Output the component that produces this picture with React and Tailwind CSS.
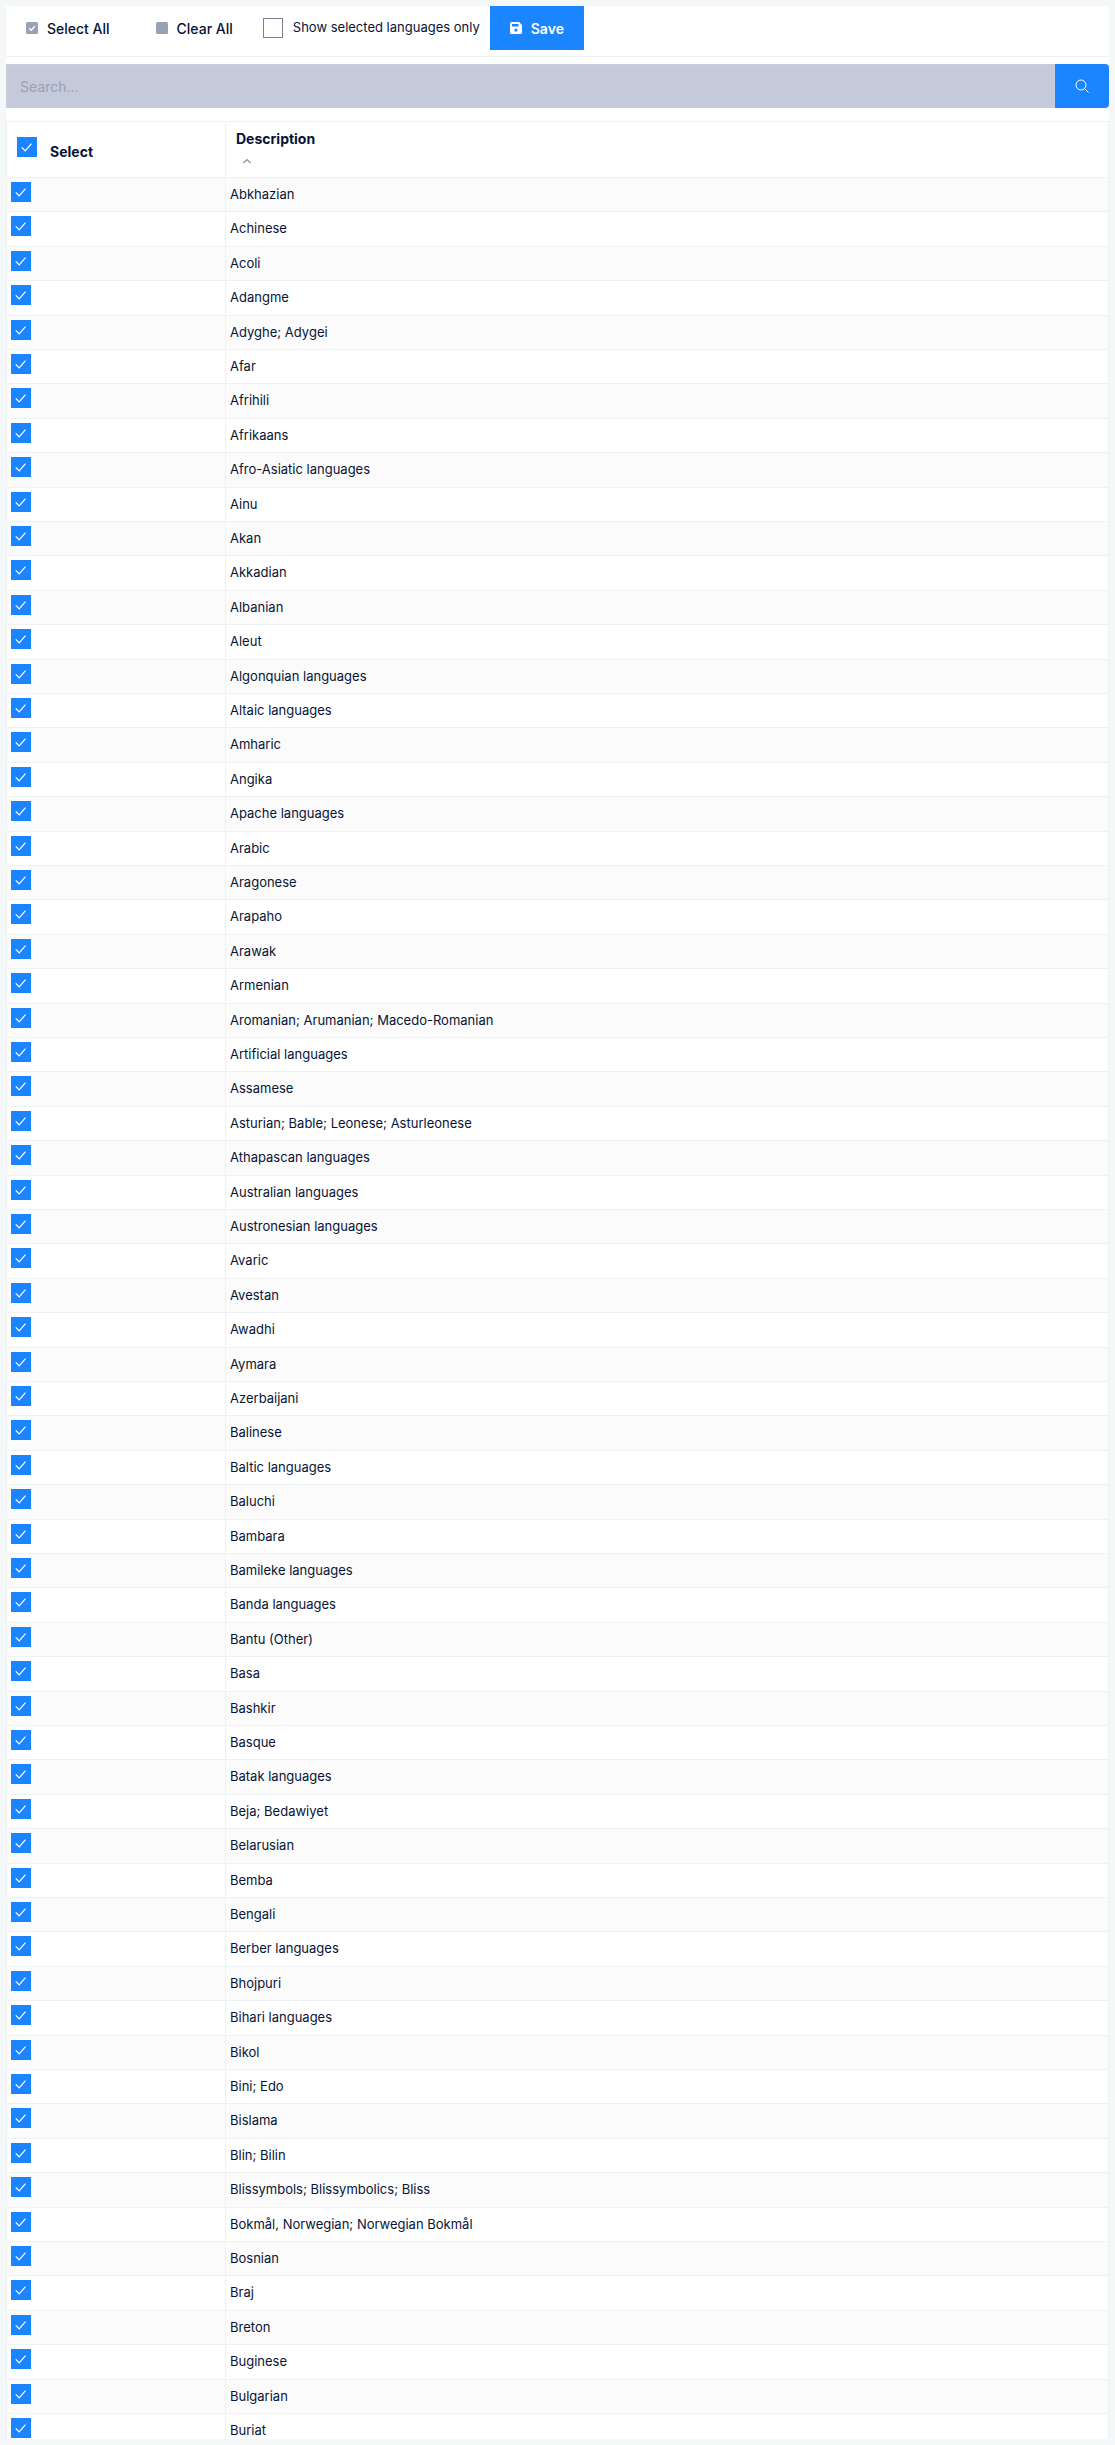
import { useState } from "react";
import clsx from "clsx";

const LANGUAGES = [
  "Abkhazian", "Achinese", "Acoli", "Adangme", "Adyghe; Adygei", "Afar", "Afrihili", "Afrikaans",
  "Afro-Asiatic languages", "Ainu", "Akan", "Akkadian", "Albanian", "Aleut", "Algonquian languages",
  "Altaic languages", "Amharic", "Angika", "Apache languages", "Arabic", "Aragonese", "Arapaho",
  "Arawak", "Armenian", "Aromanian; Arumanian; Macedo-Romanian", "Artificial languages", "Assamese",
  "Asturian; Bable; Leonese; Asturleonese", "Athapascan languages", "Australian languages",
  "Austronesian languages", "Avaric", "Avestan", "Awadhi", "Aymara", "Azerbaijani", "Balinese",
  "Baltic languages", "Baluchi", "Bambara", "Bamileke languages", "Banda languages", "Bantu (Other)",
  "Basa", "Bashkir", "Basque", "Batak languages", "Beja; Bedawiyet", "Belarusian", "Bemba", "Bengali",
  "Berber languages", "Bhojpuri", "Bihari languages", "Bikol", "Bini; Edo", "Bislama", "Blin; Bilin",
  "Blissymbols; Blissymbolics; Bliss", "Bokmål, Norwegian; Norwegian Bokmål", "Bosnian", "Braj",
  "Breton", "Buginese", "Bulgarian", "Buriat",
];

function Checkbox({ id, label, checked, onChange }) {
  return (
    <span className="grid h-5 w-5 shrink-0">
      <input
        id={id}
        type="checkbox"
        aria-label={label}
        checked={checked}
        onChange={onChange}
        className="col-start-1 row-start-1 h-5 w-5 appearance-none border border-[#7c7f96] bg-white checked:border-[#1b84ff] checked:bg-[#1b84ff]"
      />
      {checked && (
        <svg className="pointer-events-none col-start-1 row-start-1 h-5 w-5" viewBox="0 0 20 20" fill="none" stroke="#fff" strokeWidth="1.2">
          <path d="M4.8 10.3 8.2 13.800 14.500 6.600" />
        </svg>
      )}
    </span>
  );
}

function ToolbarButton({ icon, primary, onClick, children }) {
  return (
    <button
      type="button"
      onClick={onClick}
      className={clsx(
        "flex h-11 items-center gap-[9px] px-5 text-[14px]",
        primary ? "bg-[#1b84ff] font-semibold text-white" : "font-medium text-[#071437]"
      )}
    >
      {icon}
      {children}
    </button>
  );
}

export default function App() {
  const [selected, setSelected] = useState(() => new Set(LANGUAGES));
  const [query, setQuery] = useState("");
  const [onlySelected, setOnlySelected] = useState(false);
  const [ascending, setAscending] = useState(true);

  const selectAll = () => setSelected(new Set(LANGUAGES));
  const clearAll = () => setSelected(new Set());
  const allSelected = selected.size === LANGUAGES.length;

  const toggle = (name) => {
    const next = new Set(selected);
    if (next.has(name)) next.delete(name);
    else next.add(name);
    setSelected(next);
  };

  const rows = LANGUAGES.filter(
    (name) => name.toLowerCase().includes(query.toLowerCase()) && (!onlySelected || selected.has(name))
  );
  if (!ascending) rows.reverse();

  return (
    <div className="flex h-screen flex-col bg-[#f5f8f9] p-[6px] font-['Inter',sans-serif] text-[#071437]">
      <div className="flex min-h-0 flex-1 flex-col bg-white">
        {/* Toolbar */}
        <div className="flex h-[51px] shrink-0 items-start border-b border-[#f1f1f2]">
          <ToolbarButton
            onClick={selectAll}
            icon={
              <svg className="h-3 w-3" viewBox="0 0 12 12">
                <rect width="12" height="12" rx="1.5" fill="#99a1b7" />
                <path d="M3.2 6.2 5.2 8.2 8.8 4.2" fill="none" stroke="#fff" strokeWidth="1.3" />
              </svg>
            }
          >
            Select All
          </ToolbarButton>
          <div className="ml-[6px]">
            <ToolbarButton
              onClick={clearAll}
              icon={
                <svg className="h-3 w-3" viewBox="0 0 12 12">
                  <rect width="12" height="12" rx="1.5" fill="#99a1b7" />
                </svg>
              }
            >
              Clear All
            </ToolbarButton>
          </div>
          <div className="mx-[10px] flex h-11 items-center gap-[10px]">
            <Checkbox id="only-selected" checked={onlySelected} onChange={() => setOnlySelected(!onlySelected)} />
            <label htmlFor="only-selected" className="text-[13px]">Show selected languages only</label>
          </div>
          <ToolbarButton
            primary
            icon={
              <svg className="h-3 w-3" viewBox="0 0 12 12">
                <path
                  fill="#fff"
                  fillRule="evenodd"
                  d="M1.5 0H9l3 3v7.500a1.500 1.500 0 0 1-1.500 1.500h-9A1.500 1.500 0 0 1 0 10.500v-9A1.500 1.500 0 0 1 1.500 0ZM2 2v2.500h6.500V2ZM6 6.500a1.600 1.600 0 1 0 0 3.200 1.600 1.600 0 0 0 0-3.200Z"
                />
              </svg>
            }
          >
            Save
          </ToolbarButton>
        </div>

        {/* Search */}
        <div className="mt-[7px] flex h-11 shrink-0">
          <input
            type="text"
            aria-label="Search languages"
            placeholder="Search..."
            value={query}
            onChange={(e) => setQuery(e.target.value)}
            className="min-w-0 flex-1 border border-[#c9cedd] bg-[#c4cada] px-[13px] text-[14px] outline-none placeholder:text-[#99a1b7]"
          />
          <button type="button" aria-label="Search" className="flex w-[54px] items-center justify-center rounded-r bg-[#1b84ff]">
            <svg className="h-[14px] w-[14px]" viewBox="0 0 14 14" fill="none" stroke="#fff" strokeWidth="1">
              <circle cx="6" cy="6" r="5" />
              <path d="M9.600 9.600 13.500 13.500" />
            </svg>
          </button>
        </div>

        {/* Languages table */}
        <div className="mt-[13px] min-h-0 flex-1 overflow-hidden border-x border-t border-[#eff2f3]">
          <table className="w-full table-fixed border-separate border-spacing-0 text-left text-[13px]">
            <thead>
              <tr className="h-14">
                <th className="w-[219px] border-r border-b border-[#eff2f3] p-0 align-top">
                  <div className="flex items-start gap-[13px] pt-[15px] pl-[10px]">
                    <Checkbox label="Select all rows" checked={allSelected} onChange={allSelected ? clearAll : selectAll} />
                    <span className="pt-[5px] text-[14px] leading-5 font-bold">Select</span>
                  </div>
                </th>
                <th className="border-b border-[#eff2f3] p-0 align-top" aria-sort={ascending ? "ascending" : "descending"}>
                  <button
                    type="button"
                    onClick={() => setAscending(!ascending)}
                    className="flex flex-col items-start gap-[7px] pt-[7px] pl-[10px] text-[14px] leading-5 font-bold"
                  >
                    Description
                    <svg
                      className={clsx("ml-[6px] h-[10px] w-[10px]", !ascending && "rotate-180")}
                      viewBox="0 0 10 10"
                      fill="none"
                      stroke="#8e9099"
                      strokeWidth="1.2"
                    >
                      <path d="M1.500 7 5 3.500 8.500 7" />
                    </svg>
                  </button>
                </th>
              </tr>
            </thead>
            <tbody>
              {rows.map((name, i) => (
                <tr key={name} className="h-[34px] odd:bg-[#fbfbfb] [&:nth-child(5n+2)]:h-[35px] [&:nth-child(5n+4)]:h-[35px]">
                  <td className="border-r border-b border-[#eff2f3] p-0 pt-1 pl-1 align-top">
                    <Checkbox label={name} checked={selected.has(name)} onChange={() => toggle(name)} />
                  </td>
                  <td className="border-b border-[#eff2f3] p-0 pt-[6px] pl-1 align-top leading-5">{name}</td>
                </tr>
              ))}
            </tbody>
          </table>
        </div>
      </div>
    </div>
  );
}
